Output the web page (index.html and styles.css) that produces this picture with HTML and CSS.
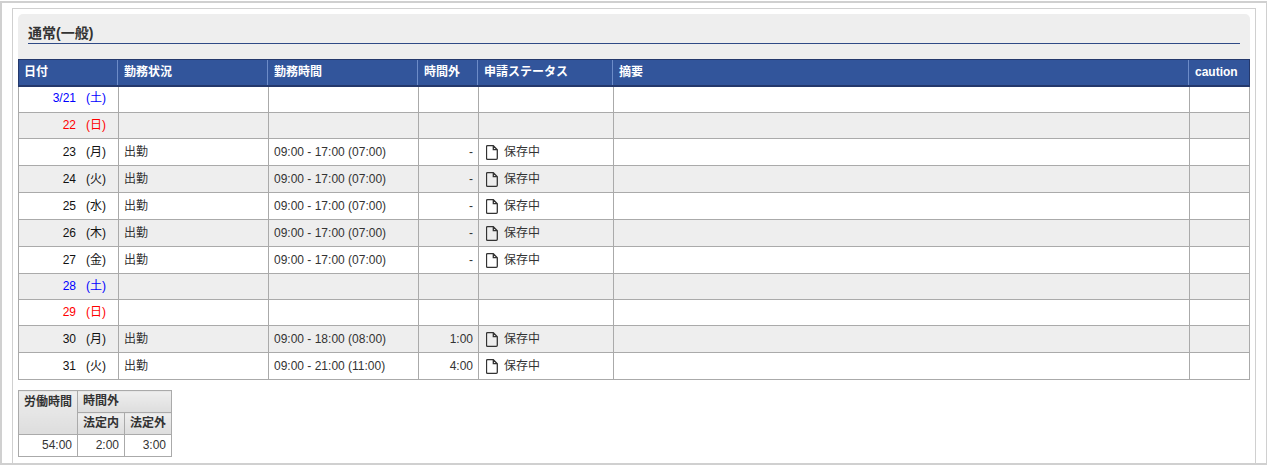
FILE: index.html
```html
<!DOCTYPE html>
<html lang="ja">
<head>
<meta charset="utf-8">
<title>通常(一般)</title>
<link rel="stylesheet" href="styles.css">
</head>
<body>
<svg class="defs" width="0" height="0" aria-hidden="true"><symbol id="doc" viewBox="0 0 12 15"><path d="M1.500.7h5.800l4 4v8.600q0 1-1 1H1.500q-1 0-1-1V1.700q0-1 1-1zM7.300.7v4h4" fill="none" stroke="#333" stroke-width="1.300"/></symbol></svg>
<div class="outer">
  <div class="inner">
    <div class="title-band"><h2 class="title">通常(一般)</h2></div>
    <table class="main">
      <colgroup><col class="c1"><col class="c2"><col class="c3"><col class="c4"><col class="c5"><col><col class="c7"></colgroup>
      <thead><tr><th>日付</th><th>勤務状況</th><th>勤務時間</th><th>時間外</th><th>申請ステータス</th><th>摘要</th><th>caution</th></tr></thead>
      <tbody>
        <tr class="empty first sat"><td class="date">3/21<span class="dow">(土)</span></td><td></td><td></td><td></td><td></td><td></td><td></td></tr>
        <tr class="empty alt sun"><td class="date">22<span class="dow">(日)</span></td><td></td><td></td><td></td><td></td><td></td><td></td></tr>
        <tr><td class="date">23<span class="dow">(月)</span></td><td>出勤</td><td>09:00 - 17:00 (07:00)</td><td class="num">-</td><td><span class="st"><svg class="ico"><use href="#doc"/></svg>保存中</span></td><td></td><td></td></tr>
        <tr class="alt"><td class="date">24<span class="dow">(火)</span></td><td>出勤</td><td>09:00 - 17:00 (07:00)</td><td class="num">-</td><td><span class="st"><svg class="ico"><use href="#doc"/></svg>保存中</span></td><td></td><td></td></tr>
        <tr><td class="date">25<span class="dow">(水)</span></td><td>出勤</td><td>09:00 - 17:00 (07:00)</td><td class="num">-</td><td><span class="st"><svg class="ico"><use href="#doc"/></svg>保存中</span></td><td></td><td></td></tr>
        <tr class="alt"><td class="date">26<span class="dow">(木)</span></td><td>出勤</td><td>09:00 - 17:00 (07:00)</td><td class="num">-</td><td><span class="st"><svg class="ico"><use href="#doc"/></svg>保存中</span></td><td></td><td></td></tr>
        <tr><td class="date">27<span class="dow">(金)</span></td><td>出勤</td><td>09:00 - 17:00 (07:00)</td><td class="num">-</td><td><span class="st"><svg class="ico"><use href="#doc"/></svg>保存中</span></td><td></td><td></td></tr>
        <tr class="empty alt sat"><td class="date">28<span class="dow">(土)</span></td><td></td><td></td><td></td><td></td><td></td><td></td></tr>
        <tr class="empty sun"><td class="date">29<span class="dow">(日)</span></td><td></td><td></td><td></td><td></td><td></td><td></td></tr>
        <tr class="alt"><td class="date">30<span class="dow">(月)</span></td><td>出勤</td><td>09:00 - 18:00 (08:00)</td><td class="num">1:00</td><td><span class="st"><svg class="ico"><use href="#doc"/></svg>保存中</span></td><td></td><td></td></tr>
        <tr><td class="date">31<span class="dow">(火)</span></td><td>出勤</td><td>09:00 - 21:00 (11:00)</td><td class="num">4:00</td><td><span class="st"><svg class="ico"><use href="#doc"/></svg>保存中</span></td><td></td><td></td></tr>
      </tbody>
    </table>
    <table class="summary">
      <thead>
        <tr><th rowspan="2" class="s1">労働時間</th><th colspan="2" class="left">時間外</th></tr>
        <tr><th class="s2">法定内</th><th class="s3">法定外</th></tr>
      </thead>
      <tbody><tr><td>54:00</td><td>2:00</td><td>3:00</td></tr></tbody>
    </table>
  </div>
</div>
</body>
</html>
```
FILE: styles.css
```css
* { box-sizing: border-box; }
html, body { margin: 0; padding: 0; background: #fff; }
body { font-family: "Liberation Sans", "Noto Sans CJK JP", sans-serif; font-size: 12px; line-height: 14px; color: #333; height: 465px; overflow: hidden; }
.defs { position: absolute; }
.outer { margin: 1px 0 0 0; width: 1267px; height: 464px; border: 2px solid #d0d0d0; border-right-width: 1px; padding: 5px 10px 0 10px; }
.inner { border: 1px solid #d0d0d0; height: 456px; padding: 5px 5px 0 5px; width: 1244px; }
.title-band { background: #eee; border-radius: 5px 5px 0 0; height: 45px; padding: 13px 10px 0 10px; }
.title { margin: 0; font-size: 14px; line-height: 13px; height: 17px; font-weight: bold; color: #333; border-bottom: 1px solid #2f4a86; }
table { border-collapse: collapse; table-layout: fixed; }
.main { width: 1232px; }
.c1 { width: 100px; } .c2 { width: 150px; } .c3 { width: 150px; } .c4 { width: 60px; } .c5 { width: 135px; } .c7 { width: 60px; }
.main th { background: #32559b; color: #fff; font-size: 12px; font-weight: bold; text-align: left; height: 26px; padding: 0 5px 1px 5px; border-top: 1px solid #24386b; border-bottom: 2px solid #24386b; border-left: 1px solid #32559b; box-shadow: inset -1px 0 0 #6d8cc8; }
.main th:first-child { border-left: 1px solid #24386b; }
.main th:last-child { border-right: 1px solid #24386b; box-shadow: none; }
.main td { border: 1px solid #aaa; height: 27px; padding: 0 5px 1px; background: #fff; vertical-align: middle; }
.main tr.empty td { height: 26px; padding-bottom: 2px; }
.main tr.first td { height: 27px; }
.main tr.alt td { background: #eee; }
.main .date { text-align: right; padding-right: 12px; white-space: nowrap; color: #111; }
.main .num { text-align: right; }
.dow { margin-left: 10px; }
.main .sat .date { color: #00f; }
.main .sun .date { color: #f00; }
.st { display: flex; align-items: center; gap: 6px; padding-left: 2px; margin-top: 1px; }
.ico { width: 12px; height: 15px; }
.summary { margin-top: 10px; width: 154px; }
.summary th { background: linear-gradient(#eee, #ddd); font-weight: bold; border: 1px solid #aaa; height: 22px; padding: 0 5px 1px; vertical-align: middle; text-align: center; }
.summary .s1 { width: 59px; vertical-align: top; padding-top: 4px; }
.summary .s2, .summary .s3 { width: 47px; }
.summary .left { text-align: left; }
.summary td { border: 1px solid #aaa; height: 22px; padding: 0 5px 2px; text-align: right; background: #fff; }
```
